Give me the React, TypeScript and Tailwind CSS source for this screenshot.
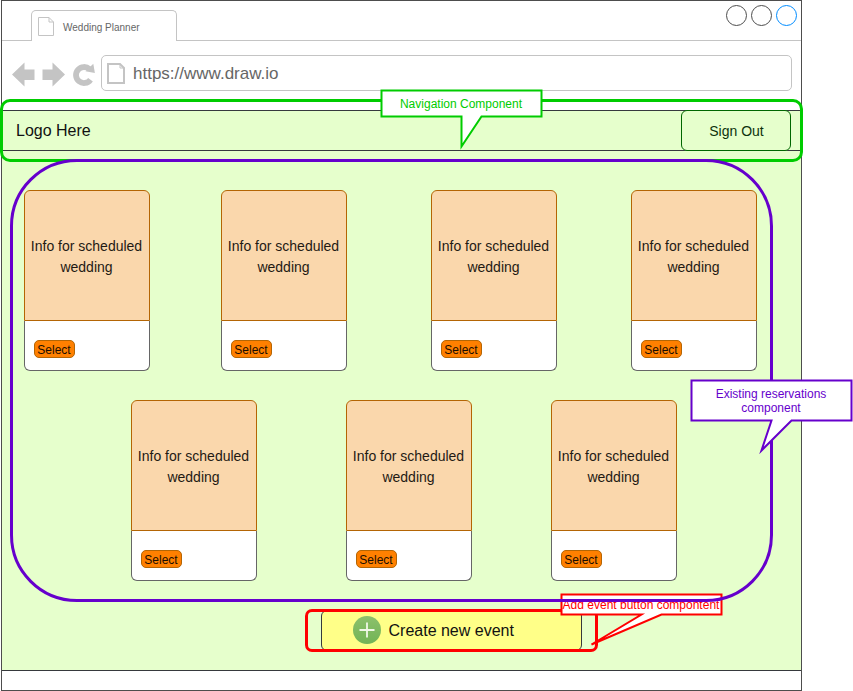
import type { ReactNode } from "react";

function PageIcon({ w, h, sw }: { w: number; h: number; sw: number }) {
  const f = 5;
  const o = sw / 2;
  return (
    <svg width={w} height={h} fill="none" stroke="#c4c4c4" strokeWidth={sw} className="block shrink-0">
      <path d={`M${o} ${o}H${w - f}L${w - o} ${f}V${h - o}H${o}Z`} />
      <path d={`M${w - f} ${o}V${f}H${w - o}`} strokeWidth={1} />
    </svg>
  );
}

function Card({ className }: { className: string }) {
  return (
    <div className={`h-[181px] w-[126px] shrink-0 ${className}`}>
      <div className="flex h-[131px] items-center justify-center rounded-t-[6px] border border-[#b46504] bg-[#fad7ac] pt-[3px] pr-px text-center text-[14px] leading-[21px] text-[#1f1a14]">
        Info for scheduled
        <br />
        wedding
      </div>
      <div className="h-[50px] rounded-b-[6px] border border-t-0 border-[#666666] bg-white pt-[19px] pl-[9px]">
        <div className="flex h-[18px] w-[41px] items-center justify-center rounded-[5px] border border-[#b46504] bg-[#ff8000] pt-px pr-px text-[12px] leading-[14px] text-[#1a0d00]">
          Select
        </div>
      </div>
    </div>
  );
}

function Note({ className, children }: { className: string; children: ReactNode }) {
  return <div className={`absolute flex justify-center text-center text-[12px] leading-[14px] whitespace-nowrap ${className}`}>{children}</div>;
}

export default function App() {
  return (
    <div className="relative h-[691px] w-[853px] overflow-hidden bg-white pl-px font-['Liberation_Sans',Arial,sans-serif]">
      <div className="flex h-[691px] w-[801px] flex-col border border-[#4d4d4d]">
        <header className="flex h-[40px] items-end">
          <div className="h-px w-[29px] bg-[#c4c4c4]" />
          <div className="flex h-[31px] w-[146px] items-start rounded-t-[5px] border border-b-0 border-[#c4c4c4] pt-[6px] pl-[6px]">
            <PageIcon w={16} h={19} sw={1} />
            <span className="ml-[9px] pt-[5px] text-[10px] leading-[12px] text-[#666666]">Wedding Planner</span>
          </div>
          <div className="flex h-[40px] flex-1 justify-end gap-[4px] border-b border-[#c4c4c4] pt-[4px] pr-[4px]">
            <div className="h-[21px] w-[21px] rounded-full border border-[#4d4d4d]" />
            <div className="h-[21px] w-[21px] rounded-full border border-[#4d4d4d]" />
            <div className="h-[21px] w-[21px] rounded-full border border-[#008cff]" />
          </div>
        </header>
        <div className="flex h-[69px] items-start pt-[14px] pl-[10px]">
          <svg width="89" height="36" className="block shrink-0">
            <path d="M0 19.500L12.500 7.500V14.500H22.500V25H12.500V31.500Z" fill="#c4c4c4" />
            <path d="M53 19.500L40.500 7.500V14.500H30.500V25H40.500V31.500Z" fill="#c4c4c4" />
            <path d="M78.500 24.700A8 8 0 1 1 77.500 14.200" fill="none" stroke="#c4c4c4" strokeWidth="5.800" />
            <path d="M81.300 8.800L82.900 18L73.500 16.200Z" fill="#c4c4c4" />
          </svg>
          <div className="flex h-[36px] w-[691px] items-center rounded-[5px] border border-[#c4c4c4] pl-[5px]">
            <PageIcon w={18} h={21} sw={2} />
            <span className="ml-[8px] pt-[2px] text-[17px] leading-[20px] text-[#666666]">https://www.draw.io</span>
          </div>
        </div>
        <nav className="flex h-[41px] items-center justify-between border-y border-[#36393d] bg-[#e6ffcc] pl-[14px]">
          <span className="text-[16px] text-[#111]">Logo Here</span>
          <button className="-my-px mr-[10px] flex h-[41px] w-[110px] items-center justify-center rounded-[6px] border border-[#006600] bg-[#e6ffcc] pt-px pl-px text-[14px] text-[#0d330d]">
            Sign Out
          </button>
        </nav>
        <main className="h-[520px] border-b border-[#36393d] bg-[#e6ffcc] pt-[39px]">
          <div className="flex">
            <Card className="ml-[22px]" />
            <Card className="ml-[71px]" />
            <Card className="ml-[84px]" />
            <Card className="ml-[74px]" />
          </div>
          <div className="mt-[29px] flex">
            <Card className="ml-[129px]" />
            <Card className="ml-[89px]" />
            <Card className="ml-[79px]" />
          </div>
          <button className="mt-[29px] ml-[319px] flex h-[41px] w-[261px] items-center rounded-[6px] border border-[#36393d] bg-[#ffff88] pl-[31px] text-[16px] text-[#111]">
            <svg width="28" height="28" className="mr-[7.5px] mb-px block">
              <defs>
                <linearGradient id="plus" x1="0" y1="0" x2="0" y2="1">
                  <stop offset="0" stopColor="#8cc06c" />
                  <stop offset="1" stopColor="#72b455" />
                </linearGradient>
              </defs>
              <circle cx="14" cy="14" r="14" fill="url(#plus)" />
              <path d="M6.500 14H21.500M14 6.500V21.500" stroke="#f1f8e8" strokeWidth="1.800" />
            </svg>
            Create new event
          </button>
        </main>
      </div>

      <div className="absolute top-[99px] left-0 h-[63px] w-[803px] rounded-[10px] border-[3px] border-[#00cc00]" />
      <div className="absolute top-[609px] left-[305px] h-[43px] w-[293px] rounded-[7px] border-[3px] border-[#ff0000]" />
      <svg width="853" height="691" className="absolute top-0 left-0" fill="white" strokeWidth="2" strokeMiterlimit="10">
        <path d="M381.500 90.500H541.500V116.500H481.500L461.500 146.500V116.500H381.500Z" stroke="#00cc00" />
        <path d="M561.500 594.500H721.500V614.500H661.500L591.500 644.500L641.500 614.500H561.500Z" stroke="#ff0000" />
      </svg>
      <Note className="top-[97px] left-[381px] w-[160px] text-[#00cc00]">Navigation Component</Note>
      <Note className="top-[598px] left-[561px] w-[160px] text-[#ff0000]">Add event button compontent</Note>
      <div className="absolute top-[159px] left-[10px] h-[443px] w-[763px] rounded-[67px] border-[3px] border-[#6600cc]" />
      <svg width="853" height="691" className="absolute top-0 left-0" fill="white" strokeWidth="2" strokeMiterlimit="10">
        <path d="M691.500 380.500H851.500V420.500H791.500L761.500 450.500L771.500 420.500H691.500Z" stroke="#6600cc" />
      </svg>
      <Note className="top-[387px] left-[691px] w-[160px] text-[#6600cc]">
        Existing reservations
        <br />
        component
      </Note>
    </div>
  );
}
